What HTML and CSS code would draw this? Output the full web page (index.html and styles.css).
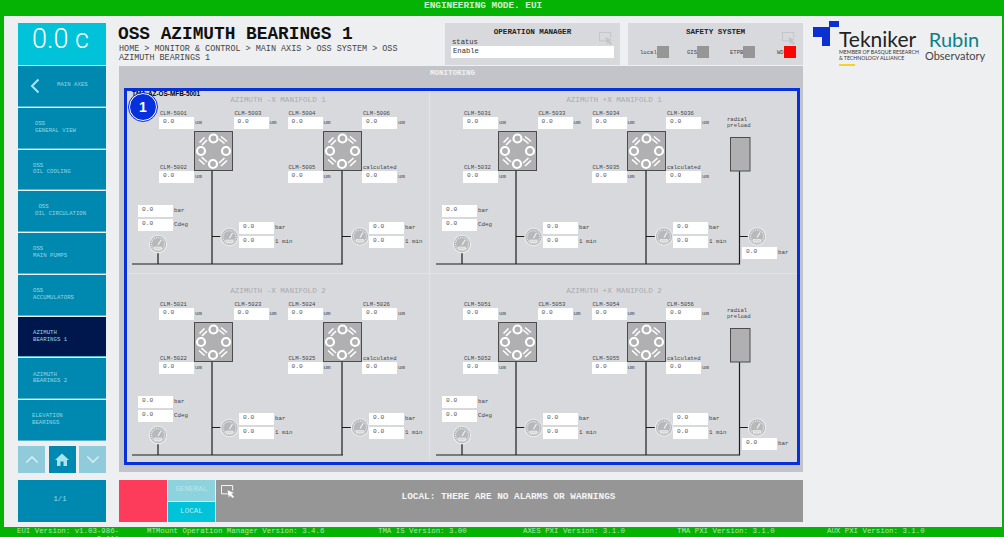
FILE: index.html
```html
<!DOCTYPE html>
<html lang="en">
<head>
<meta charset="utf-8">
<title>OSS Azimuth Bearings 1</title>
<link rel="stylesheet" href="styles.css">
</head>
<body>
<svg class="defs" aria-hidden="true">
  <defs>
    <g id="valve">
      <rect x="0.5" y="0.5" width="38" height="39" fill="#b0b0b2" stroke="#4c4c4c"/>
      <g fill="none" stroke="#fff" stroke-width="2.2">
        <circle cx="19.5" cy="7.5" r="4"/>
        <circle cx="7" cy="20" r="4"/>
        <circle cx="32" cy="20" r="4"/>
        <circle cx="19" cy="33" r="4"/>
      </g>
      <g stroke="#fff" stroke-width="1.6">
        <path d="M5.500 11.500l5-5M8 14l5-5"/>
        <path d="M27 5.500l6 5M25 8l5.500 4.500"/>
        <path d="M5 28.500l5.500 5M7.500 26l5.500 5"/>
        <path d="M27 35l6-5.500M25 32l5.500-5"/>
      </g>
    </g>
    <g id="gauge">
      <circle r="8.700" fill="#b7b8ba" stroke="#eceded" stroke-width="1.100"/>
      <circle r="6.500" fill="none" stroke="#efefef" stroke-width="1.300" stroke-dasharray="0.800 1" pathLength="40" transform="rotate(140)"/>
      <path d="M0 1l3-5" stroke="#f2f2f2" stroke-width="1.200"/>
      <rect x="-3.500" y="3" width="7" height="2.500" fill="#d9d9d9" stroke="#f5f5f5" stroke-width="0.600"/>
    </g>
    <g id="wiring-base">
      <path d="M85 80V173M215 80V173M5 173H216M31 162V173M85 145.500H94M215 145.500H224" fill="none" stroke="#1d1d1d" stroke-width="1.200"/>
      <use href="#valve" x="67" y="40"/>
      <use href="#valve" x="196" y="40"/>
      <use href="#gauge" x="31" y="153"/>
      <use href="#gauge" x="102.500" y="146"/>
      <use href="#gauge" x="233" y="145.500"/>
    </g>
    <g id="wiring-radial">
      <use href="#wiring-base"/>
      <path d="M216 173H308.500V80M308.500 145.500H317" fill="none" stroke="#1d1d1d" stroke-width="1.200"/>
      <rect x="299.500" y="46.500" width="19.500" height="33.500" fill="#b0b0b2" stroke="#4c4c4c"/>
      <use href="#gauge" x="326" y="145.500"/>
    </g>
    <g id="cursor">
      <path d="M9.500 9.500H.5V.5H12.500V6" fill="none" stroke="currentColor"/>
      <path d="M7 5.500l7 3-3 1 3 3-1.500 1.500-3-3-1 3z" fill="currentColor"/>
    </g>
  </defs>
</svg>

<div class="app">
  <header class="topbar">ENGINEERING MODE. EUI</header>

  <div class="main">
    <aside class="sidebar">
      <div class="temp">0.0 c</div>
      <nav class="nav">
        <a class="tile tile-back">
          <svg class="chev" viewBox="0 0 10 16"><path d="M8.500 1.500L2 8l6.500 6.500" fill="none" stroke="#a9e4ee" stroke-width="2"/></svg>
          <span>MAIN AXES</span>
        </a>
        <a class="tile ind-17">OSS<br>GENERAL VIEW</a>
        <a class="tile">OSS<br>OIL COOLING</a>
        <a class="tile ind-19">&nbsp;OSS<br>OIL CIRCULATION</a>
        <a class="tile">OSS<br>MAIN PUMPS</a>
        <a class="tile">OSS<br>ACCUMULATORS</a>
        <a class="tile active">AZIMUTH<br>BEARINGS 1</a>
        <a class="tile">AZIMUTH<br>BEARINGS 2</a>
        <a class="tile ind-14">ELEVATION<br>BEARINGS</a>
      </nav>
      <div class="pager">
        <a class="pg pg-off"><svg viewBox="0 0 16 10"><path d="M1.500 8.500L8 2l6.500 6.500" fill="none" stroke="#d4eef3" stroke-width="1.800"/></svg></a>
        <a class="pg"><svg viewBox="0 0 14 13"><path d="M7 .5L0 7h2v6h3.500V8.500h3V13H12V7h2z" fill="#a9e4ee"/></svg></a>
        <a class="pg pg-off"><svg viewBox="0 0 16 10"><path d="M1.500 1.500L8 8l6.500-6.500" fill="none" stroke="#d4eef3" stroke-width="1.800"/></svg></a>
      </div>
      <div class="page-tile">1/1</div>
    </aside>

    <section class="content">
      <div class="head">
        <div class="titles">
          <h1 class="title">OSS AZIMUTH BEARINGS 1</h1>
          <p class="crumbs">HOME &gt; MONITOR &amp; CONTROL &gt; MAIN AXIS &gt; OSS SYSTEM &gt; OSS AZIMUTH BEARINGS 1</p>
        </div>
        <div class="card">
          <h2 class="card-title">OPERATION MANAGER</h2>
          <svg class="card-cursor" viewBox="0 0 15 15"><use href="#cursor"/></svg>
          <div class="status-lbl">status</div>
          <div class="status-val">Enable</div>
        </div>
        <div class="card">
          <h2 class="card-title">SAFETY SYSTEM</h2>
          <svg class="card-cursor" viewBox="0 0 15 15"><use href="#cursor"/></svg>
          <div class="lamps">
            <span class="lamp lamp-local">local<i></i></span>
            <span class="lamp lamp-gis">GIS<i></i></span>
            <span class="lamp lamp-etpb">ETPB<i></i></span>
            <span class="lamp lamp-wd">WD<i class="red"></i></span>
          </div>
        </div>
      </div>

      <div class="monitor">
        <div class="monitor-title">MONITORING</div>
        <div class="frame">
          <div class="tag">TMA-AZ-OS-MFB-5001</div>
          <div class="badge">1</div>

          <div class="manifold m-left">
            <div class="diagram">
              <svg class="wires"><use href="#wiring-base"/></svg>
              <div class="m-title">AZIMUTH -X MANIFOLD 1</div>
              <div class="field f1"><span class="lbl">CLM-5001</span><span class="box">0.0</span><span class="unit">um</span></div>
              <div class="field f2"><span class="lbl">CLM-5003</span><span class="box">0.0</span><span class="unit">um</span></div>
              <div class="field f3"><span class="lbl">CLM-5004</span><span class="box">0.0</span><span class="unit">um</span></div>
              <div class="field f4"><span class="lbl">CLM-5006</span><span class="box">0.0</span><span class="unit">um</span></div>
              <div class="field f5"><span class="lbl">CLM-5002</span><span class="box">0.0</span><span class="unit">um</span></div>
              <div class="field f6"><span class="lbl">CLM-5005</span><span class="box">0.0</span><span class="unit">um</span></div>
              <div class="field f7"><span class="lbl">calculated</span><span class="box">0.0</span><span class="unit">um</span></div>
              <div class="field p1"><span class="box">0.0</span><span class="unit">bar</span><span class="box">0.0</span><span class="unit">Cdeg</span></div>
              <div class="field p2"><span class="box">0.0</span><span class="unit">bar</span><span class="box">0.0</span><span class="unit">1 min</span></div>
              <div class="field p3"><span class="box">0.0</span><span class="unit">bar</span><span class="box">0.0</span><span class="unit">1 min</span></div>
            </div>
          </div>

          <div class="manifold m-right">
            <div class="diagram">
              <svg class="wires"><use href="#wiring-radial"/></svg>
              <div class="m-title">AZIMUTH +X MANIFOLD 1</div>
              <div class="field f1"><span class="lbl">CLM-5031</span><span class="box">0.0</span><span class="unit">um</span></div>
              <div class="field f2"><span class="lbl">CLM-5033</span><span class="box">0.0</span><span class="unit">um</span></div>
              <div class="field f3"><span class="lbl">CLM-5034</span><span class="box">0.0</span><span class="unit">um</span></div>
              <div class="field f4"><span class="lbl">CLM-5036</span><span class="box">0.0</span><span class="unit">um</span></div>
              <div class="field f5"><span class="lbl">CLM-5032</span><span class="box">0.0</span><span class="unit">um</span></div>
              <div class="field f6"><span class="lbl">CLM-5035</span><span class="box">0.0</span><span class="unit">um</span></div>
              <div class="field f7"><span class="lbl">calculated</span><span class="box">0.0</span><span class="unit">um</span></div>
              <div class="field p1"><span class="box">0.0</span><span class="unit">bar</span><span class="box">0.0</span><span class="unit">Cdeg</span></div>
              <div class="field p2"><span class="box">0.0</span><span class="unit">bar</span><span class="box">0.0</span><span class="unit">1 min</span></div>
              <div class="field p3"><span class="box">0.0</span><span class="unit">bar</span><span class="box">0.0</span><span class="unit">1 min</span></div>
              <div class="field p4"><span class="box">0.0</span><span class="unit">bar</span></div>
              <div class="radial">radial<br>preload</div>
            </div>
          </div>

          <div class="manifold m-left m-low">
            <div class="diagram">
              <svg class="wires"><use href="#wiring-base"/></svg>
              <div class="m-title">AZIMUTH -X MANIFOLD 2</div>
              <div class="field f1"><span class="lbl">CLM-5021</span><span class="box">0.0</span><span class="unit">um</span></div>
              <div class="field f2"><span class="lbl">CLM-5023</span><span class="box">0.0</span><span class="unit">um</span></div>
              <div class="field f3"><span class="lbl">CLM-5024</span><span class="box">0.0</span><span class="unit">um</span></div>
              <div class="field f4"><span class="lbl">CLM-5026</span><span class="box">0.0</span><span class="unit">um</span></div>
              <div class="field f5"><span class="lbl">CLM-5022</span><span class="box">0.0</span><span class="unit">um</span></div>
              <div class="field f6"><span class="lbl">CLM-5025</span><span class="box">0.0</span><span class="unit">um</span></div>
              <div class="field f7"><span class="lbl">calculated</span><span class="box">0.0</span><span class="unit">um</span></div>
              <div class="field p1"><span class="box">0.0</span><span class="unit">bar</span><span class="box">0.0</span><span class="unit">Cdeg</span></div>
              <div class="field p2"><span class="box">0.0</span><span class="unit">bar</span><span class="box">0.0</span><span class="unit">1 min</span></div>
              <div class="field p3"><span class="box">0.0</span><span class="unit">bar</span><span class="box">0.0</span><span class="unit">1 min</span></div>
            </div>
          </div>

          <div class="manifold m-right m-low">
            <div class="diagram">
              <svg class="wires"><use href="#wiring-radial"/></svg>
              <div class="m-title">AZIMUTH +X MANIFOLD 2</div>
              <div class="field f1"><span class="lbl">CLM-5051</span><span class="box">0.0</span><span class="unit">um</span></div>
              <div class="field f2"><span class="lbl">CLM-5053</span><span class="box">0.0</span><span class="unit">um</span></div>
              <div class="field f3"><span class="lbl">CLM-5054</span><span class="box">0.0</span><span class="unit">um</span></div>
              <div class="field f4"><span class="lbl">CLM-5056</span><span class="box">0.0</span><span class="unit">um</span></div>
              <div class="field f5"><span class="lbl">CLM-5052</span><span class="box">0.0</span><span class="unit">um</span></div>
              <div class="field f6"><span class="lbl">CLM-5055</span><span class="box">0.0</span><span class="unit">um</span></div>
              <div class="field f7"><span class="lbl">calculated</span><span class="box">0.0</span><span class="unit">um</span></div>
              <div class="field p1"><span class="box">0.0</span><span class="unit">bar</span><span class="box">0.0</span><span class="unit">Cdeg</span></div>
              <div class="field p2"><span class="box">0.0</span><span class="unit">bar</span><span class="box">0.0</span><span class="unit">1 min</span></div>
              <div class="field p3"><span class="box">0.0</span><span class="unit">bar</span><span class="box">0.0</span><span class="unit">1 min</span></div>
              <div class="field p4"><span class="box">0.0</span><span class="unit">bar</span></div>
              <div class="radial">radial<br>preload</div>
            </div>
          </div>
        </div>
      </div>

      <div class="alarms">
        <div class="alarm-red"></div>
        <div class="alarm-tabs">
          <div class="tab tab-off">GENERAL</div>
          <div class="tab tab-on">LOCAL</div>
        </div>
        <div class="alarm-msg">
          <svg class="alarm-cursor" viewBox="0 0 15 15"><use href="#cursor"/></svg>
          LOCAL: THERE ARE NO ALARMS OR WARNINGS
        </div>
      </div>
    </section>

    <aside class="brand">
      <svg class="t-mark" viewBox="0 0 26 25"><path d="M16 0H26V6H17V25H9V16H0V6H16z" fill="#0b2fd0"/></svg>
      <div class="tek">
        <div class="tek-name">Tekniker</div>
        <div class="tek-sub">MEMBER OF BASQUE RESEARCH<br>&amp; TECHNOLOGY ALLIANCE</div>
        <div class="tek-bar"></div>
      </div>
      <div class="rubin">
        <div class="rubin-name">Rubin</div>
        <div class="rubin-sub">Observatory</div>
      </div>
    </aside>
  </div>

  <footer class="footer">
    <span class="eui">EUI Version: v1.03-986-3.111</span>
    <span>MTMount Operation Manager Version: 3.4.6</span>
    <span>TMA IS Version: 3.00</span>
    <span>AXES PXI Version: 3.1.0</span>
    <span>TMA PXI Version: 3.1.0</span>
    <span>AUX PXI Version: 3.1.0</span>
  </footer>
</div>
</body>
</html>
```

FILE: styles.css
```css
* { box-sizing: border-box; }
html, body { margin: 0; padding: 0; }
body {
  width: 1004px;
  height: 537px;
  overflow: hidden;
  background: #05b305;
  font-family: "Liberation Mono", monospace;
  color: #333;
}
.defs { position: absolute; width: 0; height: 0; }

.app { display: flex; flex-direction: column; height: 537px; }

.topbar {
  height: 16px;
  padding-left: 424px;
  font-size: 9.4px;
  line-height: 12px;
  color: #d4f0d4;
  font-weight: bold;
}

.main {
  flex: 1;
  display: flex;
  margin: 0 2px 0 4px;
  background: #eeeff1;
  padding-left: 14px;
  padding-top: 7px;
  min-height: 0;
}

/* sidebar */
.sidebar { width: 88px; display: flex; flex-direction: column; flex: none; }
.temp {
  height: 42px;
  background: #00c3da;
  color: #fff;
  font-family: Roboto, "Liberation Sans", sans-serif;
  font-weight: 300;
  font-size: 27px;
  line-height: 33px;
  text-align: center;
  padding-right: 3px;
  margin-bottom: 1px;
}
.nav { height: 375px; display: grid; grid-template-rows: repeat(9, 1fr); row-gap: 1px; }
.tile {
  display: flex;
  flex-direction: column;
  justify-content: center;
  background: #0089b0;
  color: #8fd8e4;
  font-size: 5.7px;
  line-height: 6.8px;
  padding-left: 15px;
  border-bottom: 1px solid #5fb4cc;
}
.tile-back { flex-direction: row; justify-content: flex-start; align-items: center; padding-left: 12px; }
.tile-back span { margin-left: 17px; }
.chev { width: 10px; height: 16px; flex: none; }
.ind-17 { padding-left: 17px; }
.ind-19 { padding-left: 17px; }
.ind-14 { padding-left: 14px; }
.active { background: #00174d; }

.pager { height: 27px; margin-top: 5px; display: flex; justify-content: space-between; }
.pg { width: 27px; background: #0089b0; display: flex; align-items: center; justify-content: center; }
.pg svg { width: 14px; height: 13px; }
.pg-off { background: #90cbdc; }
.page-tile {
  height: 42px;
  margin-top: 7px;
  background: #0089b0;
  color: #9adfea;
  font-size: 7.2px;
  line-height: 38px;
  text-align: center;
  padding-right: 4px;
}

/* centre column */
.content { width: 684px; margin-left: 13px; display: flex; flex-direction: column; flex: none; }
.head { height: 43px; display: flex; gap: 8px; }
.titles { width: 319px; margin-left: -1px; flex: none; }
.title {
  margin: 0;
  font-size: 17.8px;
  line-height: 22px;
  font-weight: bold;
  color: #111;
}
.crumbs {
  margin: 0 0 0 1px;
  font-size: 8.45px;
  line-height: 8.5px;
  color: #444;
}
.card { width: 175px; height: 42px; background: #d8d9dd; position: relative; flex: none; }
.card-title {
  margin: 0;
  padding-top: 5px;
  font-size: 7.6px;
  line-height: 8px;
  font-weight: bold;
  text-align: center;
  color: #222;
}
.card-cursor { position: absolute; right: 7px; top: 9px; width: 14px; height: 14px; color: #c2c3c7; }
.status-lbl { margin: 2px 0 0 7px; font-size: 7.2px; line-height: 8px; color: #333; }
.status-val {
  margin: 0 6px 0 6px;
  height: 12px;
  background: #fff;
  padding-left: 2px;
  font-size: 7.2px;
  line-height: 10px;
  color: #333;
}
.lamps { position: relative; height: 29px; }
.lamp {
  position: absolute;
  top: 10px;
  display: flex;
  align-items: center;
  font-size: 5.6px;
  height: 12px;
  color: #444;
}
.lamp i { display: block; width: 12px; height: 12px; background: #969696; margin-left: 0; }
.lamp i.red { background: #fa0404; }
.lamp-local { left: 12px; }
.lamp-gis { left: 59px; }
.lamp-etpb { left: 102px; }
.lamp-wd { left: 149px; }

.monitor {
  height: 406px;
  background: #c3c4c9;
  position: relative;
  padding: 0 3px 7px 5px;
  display: flex;
  flex-direction: column;
}
.monitor-title {
  height: 22px;
  padding-right: 19px;
  font-size: 7.5px;
  line-height: 14px;
  font-weight: bold;
  color: #f0f0f2;
  text-align: center;
}
.frame {
  flex: 1;
  position: relative;
  border: 3px solid #0730dd;
  background: #d8d9dd;
  display: grid;
  grid-template-columns: 303px 367px;
  grid-template-rows: 183px 188px;
}
.tag {
  position: absolute;
  left: 5px;
  top: -1px;
  font-family: "Liberation Sans", sans-serif;
  font-size: 6.4px;
  line-height: 7px;
  font-weight: bold;
  color: #000;
  z-index: 2;
}
.badge {
  position: absolute;
  left: 2px;
  top: 2px;
  width: 28px;
  height: 28px;
  border-radius: 50%;
  background: #0730dd;
  border: 1px solid #fff;
  outline: 1px solid #0730dd;
  color: #fff;
  font-family: "Liberation Sans", sans-serif;
  font-weight: bold;
  font-size: 14px;
  line-height: 26px;
  text-align: center;
  z-index: 3;
}

.manifold { position: relative; }
.m-left { border-right: 1px solid #e2e3e6; }
.m-right .diagram { margin-left: 1px; }
.m-low { padding-top: 8px; border-top: 1px solid #e2e3e6; margin-top: -1px; }
.diagram { position: relative; height: 180px; padding-top: 5px; }
.wires { position: absolute; left: 0; top: 0; width: 366px; height: 180px; overflow: visible; }
.m-title {
  position: relative;
  font-size: 7.6px;
  line-height: 8px;
  text-align: center;
  color: #a9aaad;
}

.field {
  position: absolute;
  display: grid;
  grid-template-columns: 35px auto;
  column-gap: 1px;
  row-gap: 2px;
  align-items: center;
}
.lbl {
  grid-column: 1 / 3;
  margin-bottom: -2px;
  height: 7px;
  padding-left: 1px;
  font-size: 5.6px;
  line-height: 7px;
  color: #444;
  white-space: nowrap;
}
.box {
  height: 12px;
  background: #fff;
  padding-left: 4px;
  font-size: 6.2px;
  line-height: 9px;
  color: #555;
}
.unit { font-size: 5.8px; line-height: 12px; color: #444; white-space: nowrap; }

.f1 { left: 32px; top: 19px; }
.f2 { left: 106.500px; top: 19px; }
.f3 { left: 160.500px; top: 19px; }
.f4 { left: 235px; top: 19px; }
.f5 { left: 32px; top: 73px; }
.f6 { left: 160.500px; top: 73px; }
.f7 { left: 235px; top: 73px; }
.p1 { left: 11px; top: 114px; }
.p2 { left: 112px; top: 131px; }
.p3 { left: 242px; top: 131px; }
.p4 { left: 311px; top: 156px; }
.radial {
  position: absolute;
  left: 296px;
  top: 26px;
  font-size: 5.6px;
  line-height: 6px;
  color: #444;
}

/* alarm strip */
.alarms { height: 42px; margin-top: 8px; display: flex; }
.alarm-red { width: 48px; background: #fd3b5b; }
.alarm-tabs { width: 48px; display: flex; flex-direction: column; border-left: 1px solid #eef; }
.tab { flex: 1; font-size: 7.6px; line-height: 19px; text-align: center; }
.tab-off { background: #8cd3dd; color: #b9e6ea; border-bottom: 1px solid #d5eef2; }
.tab-on { background: #00c3da; color: #b5edf4; }
.alarm-msg {
  flex: 1;
  margin-left: 1px;
  padding-right: 2px;
  position: relative;
  background: #969696;
  font-size: 9.4px;
  line-height: 34px;
  font-weight: bold;
  text-align: center;
  color: #f4f4f4;
}
.alarm-cursor { position: absolute; left: 5px; top: 5px; width: 14px; height: 14px; color: #fff; }

/* logos */
.brand { flex: none; margin-left: 10px; display: flex; }
.t-mark { width: 26px; height: 25px; margin-top: -2px; flex: none; }
.tek { width: 86px; flex: none; padding-top: 6px; }
.tek-name {
  font-family: Lato, sans-serif;
  font-size: 21px;
  line-height: 20px;
  color: #222;
}
.tek-sub {
  margin-top: 1px;
  font-family: Lato, sans-serif;
  font-size: 5.2px;
  line-height: 5.5px;
  color: #333;
  white-space: nowrap;
}
.tek-bar { width: 16px; height: 2px; margin-top: 3px; background: #f3d22b; }
.rubin { text-align: center; padding-top: 6px; width: 58px; flex: none; }
.rubin-name {
  font-family: Lato, sans-serif;
  font-size: 20px;
  line-height: 20px;
  color: #0d7f87;
}
.rubin-sub {
  margin-top: 1px;
  font-family: Lato, sans-serif;
  font-size: 11px;
  line-height: 11px;
  color: #444;
}

/* footer */
.footer {
  height: 10px;
  overflow: hidden;
  display: grid;
  grid-template-columns: 130px 231px 145px 154px 150px auto;
  padding-left: 17px;
  font-size: 7.4px;
  line-height: 8px;
  color: #a8eaa8;
}
.eui { width: 102px; text-align: right; }
```
